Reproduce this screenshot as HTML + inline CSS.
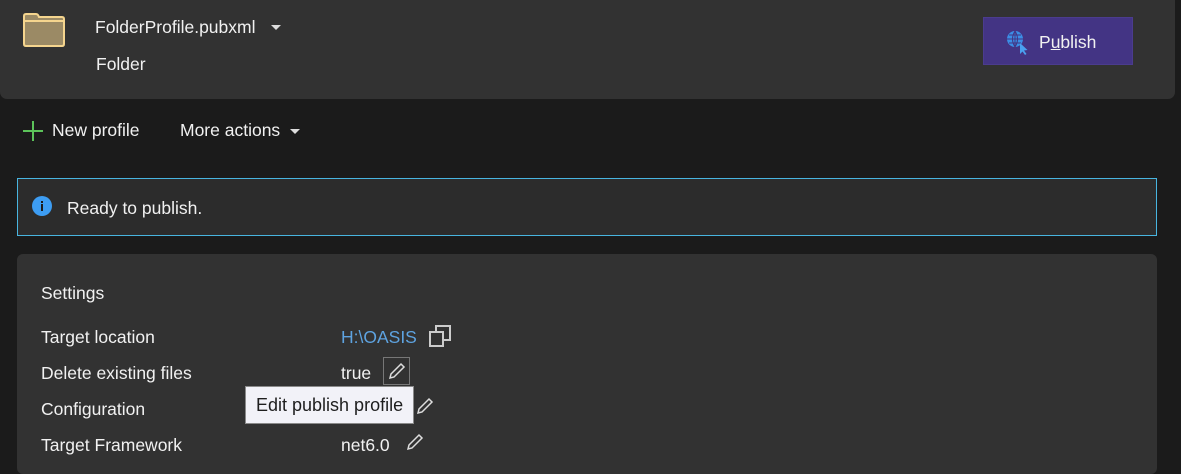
<!DOCTYPE html>
<html><head><meta charset="utf-8"><style>
*{margin:0;padding:0;box-sizing:border-box}
body{width:1181px;height:449px;overflow:hidden;background:#1b1b1b;font-family:"Segoe UI","Liberation Sans",sans-serif;color:#f1f1f1;font-size:17.5px;position:relative}
.abs{position:absolute;white-space:nowrap}
#hdr{position:absolute;left:0;top:0;width:1175px;height:99px;background:#323232;border-radius:0 0 7px 7px}
#pub{position:absolute;left:983px;top:17px;width:150px;height:48px;background:#433484;border:1px solid #4b3c8e}
#info{position:absolute;left:17px;top:178px;width:1140px;height:58px;background:#2c2c2c;border:1px solid #48b5e0}
#set{position:absolute;left:17px;top:254px;width:1140px;height:220px;background:#323232;border-radius:6px}
#tip{position:absolute;left:245px;top:386px;width:169px;height:38px;background:#f2f2f8;border:1px solid #8a8a8a;color:#1e1e1e;font-size:18px;padding:8px 0 0 10px}
</style></head><body>
<div id="hdr"></div>
<svg class="abs" style="left:22px;top:13px" width="44" height="34" viewBox="0 0 44 34"><path d="M2 3 Q2 1 4 1 H14 Q16 1 17 4 H40 Q42 4 42 6 V31 Q42 33 40 33 H4 Q2 33 2 31 Z" fill="#9b8a65" stroke="#f5d58e" stroke-width="2"/><path d="M2 8 H42" stroke="#f5d58e" stroke-width="2"/></svg>
<div class="abs" style="left:95px;top:17px">FolderProfile.pubxml</div>
<svg class="abs" style="left:271px;top:25px" width="10" height="6"><path d="M0 0 H10 L5 5 Z" fill="#ddd"/></svg>
<div class="abs" style="left:96px;top:54px">Folder</div>
<div id="pub"></div>
<svg class="abs" style="left:1006px;top:30px" width="26" height="26" viewBox="0 0 26 26"><circle cx="9" cy="9" r="8" fill="#3b8ee6"/><path d="M1 9H17M9 1V17M3 5H15M3 13H15M9 1Q4 9 9 17M9 1Q14 9 9 17" stroke="#433484" stroke-width="1" fill="none"/><path d="M14 13 L14 24 L16.5 21.5 L19 25 L20.5 24 L18 20.5 L21.5 20 Z" fill="#4aa0f0"/></svg>
<div class="abs" style="left:1039px;top:32px">P<u>u</u>blish</div>
<svg class="abs" style="left:23px;top:121px" width="20" height="20"><path d="M10 0V20M0 10H20" stroke="#5cc35a" stroke-width="2"/></svg>
<div class="abs" style="left:52px;top:120px">New profile</div>
<div class="abs" style="left:180px;top:120px">More actions</div>
<svg class="abs" style="left:290px;top:129px" width="10" height="6"><path d="M0 0 H10 L5 5 Z" fill="#ddd"/></svg>
<div id="info"></div>
<svg class="abs" style="left:32px;top:196px" width="20" height="20"><circle cx="10" cy="10" r="10" fill="#3d9df3"/><rect x="9" y="8" width="2" height="7" fill="#1b1b1b"/><rect x="9" y="5" width="2" height="2" fill="#1b1b1b"/></svg>
<div class="abs" style="left:67px;top:198px">Ready to publish.</div>
<div id="set"></div>
<div class="abs" style="left:41px;top:283px">Settings</div>
<div class="abs" style="left:41px;top:327px">Target location</div>
<div class="abs" style="left:341px;top:327px;color:#5ea3e0">H:\OASIS</div>
<svg class="abs" style="left:429px;top:325px" width="23" height="23"><rect x="7" y="1" width="14" height="14" fill="none" stroke="#ccc" stroke-width="2"/><rect x="1" y="7" width="13" height="14" fill="#323232" stroke="#ccc" stroke-width="2"/></svg>
<div class="abs" style="left:41px;top:363px">Delete existing files</div>
<div class="abs" style="left:341px;top:363px">true</div>
<div class="abs" style="left:383px;top:357px;width:27px;height:28px;border:1px solid #777"></div>
<svg class="abs" style="left:388px;top:362px" width="18" height="18"><path d="M2 16 L3 12 L13 2 L16 5 L6 15 Z" fill="none" stroke="#ddd" stroke-width="1.5"/></svg>
<div class="abs" style="left:41px;top:399px">Configuration</div>
<svg class="abs" style="left:416px;top:397px" width="18" height="18"><path d="M2 16 L3 12 L13 2 L16 5 L6 15 Z" fill="none" stroke="#ddd" stroke-width="1.5"/></svg>
<div class="abs" style="left:41px;top:435px">Target Framework</div>
<div class="abs" style="left:341px;top:435px">net6.0</div>
<svg class="abs" style="left:406px;top:433px" width="18" height="18"><path d="M2 16 L3 12 L13 2 L16 5 L6 15 Z" fill="none" stroke="#ddd" stroke-width="1.5"/></svg>
<div id="tip">Edit publish profile</div>
</body></html>
